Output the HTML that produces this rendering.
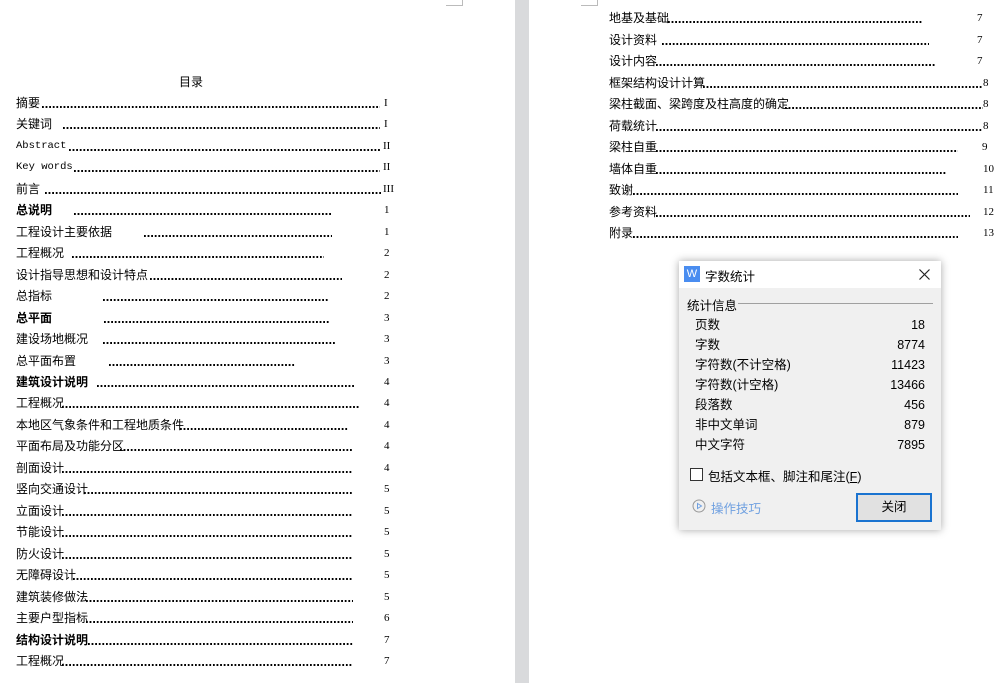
<!DOCTYPE html>
<html><head><meta charset="utf-8"><style>
body{margin:0;width:1004px;height:683px;position:relative;overflow:hidden;background:#fff;font-family:"Liberation Sans","Noto Sans CJK SC",sans-serif;color:#000}
.t{position:absolute;font-size:12px;line-height:14px;white-space:nowrap}
.b{font-weight:bold}
.m{font-family:"Liberation Mono","Noto Sans CJK SC",monospace;font-size:10.5px}
.d{position:absolute;height:2px;background-image:linear-gradient(90deg,#000 0 2px,transparent 2px);background-size:3.6px 2px}
.n{position:absolute;font-size:11px;line-height:14px;font-family:"Liberation Serif",serif}
.gap{position:absolute;left:515px;top:0;width:14px;height:683px;background:#d9dadc}
.dlg{position:absolute;left:679px;top:261px;width:262px;height:269px;background:#f0f0f0;box-shadow:0 0 8px rgba(0,0,0,.35);font-size:12.5px}
.dlg .tb{height:27px;background:#fff;position:relative}
.row{position:absolute;left:16px;right:16px;height:16px;line-height:16px}
.row span{position:absolute;top:0;left:0}
.row span:last-child{left:auto;right:0}
</style></head><body>
<div style="position:absolute;left:446px;top:5px;width:17px;height:1px;background:#bbb"></div>
<div style="position:absolute;left:462px;top:0;width:1px;height:6px;background:#bbb"></div>
<div style="position:absolute;left:581px;top:5px;width:17px;height:1px;background:#bbb"></div>
<div style="position:absolute;left:597px;top:0;width:1px;height:6px;background:#bbb"></div>
<div class="gap"></div>
<div class="t" style="left:179px;top:75px">目录</div>
<div id="L"></div>
<script>
var L=[["摘要",42,380,"I",384,0,0],["关键词",63,380,"I",384,0,0],["Abstract",69,381,"II",383,1,0],["Key words",74,380,"II",383,1,0],["前言",45,382,"III",383,0,0],["总说明",74,332,"1",384,0,1],["工程设计主要依据",144,332,"1",384,0,0],["工程概况",72,324,"2",384,0,0],["设计指导思想和设计特点",150,342,"2",384,0,0],["总指标",103,328,"2",384,0,0],["总平面",104,330,"3",384,0,1],["建设场地概况",103,336,"3",384,0,0],["总平面布置",109,295,"3",384,0,0],["建筑设计说明",97,354,"4",384,0,1],["工程概况",62,360,"4",384,0,0],["本地区气象条件和工程地质条件",180,348,"4",384,0,0],["平面布局及功能分区",120,353,"4",384,0,0],["剖面设计",62,353,"4",384,0,0],["竖向交通设计",84,353,"5",384,0,0],["立面设计",62,353,"5",384,0,0],["节能设计",62,353,"5",384,0,0],["防火设计",62,353,"5",384,0,0],["无障碍设计",73,353,"5",384,0,0],["建筑装修做法",86,353,"5",384,0,0],["主要户型指标",86,353,"6",384,0,0],["结构设计说明",88,353,"7",384,0,1],["工程概况",62,353,"7",384,0,0]];
var R=[["地基及基础",668,923,"7",977],["设计资料",662,929,"7",977],["设计内容",656,935,"7",977],["框架结构设计计算",703,983,"8",983],["梁柱截面、梁跨度及柱高度的确定",785,983,"8",983],["荷载统计",656,983,"8",983],["梁柱自重",656,958,"9",982],["墙体自重",656,947,"10",983],["致谢",633,958,"11",983],["参考资料",656,970,"12",983],["附录",633,958,"13",983]];
var h="";
function row(x,y,r){var c="t"+(r[5]?" m":"")+(r[6]?" b":"");h+='<div class="'+c+'" style="left:'+x+'px;top:'+(y-6)+'px">'+r[0]+'</div>';h+='<div class="d" style="left:'+r[1]+'px;top:'+(y+4)+'px;width:'+(r[2]-r[1])+'px"></div>';h+='<div class="n" style="left:'+r[4]+'px;top:'+(y-6)+'px">'+r[3]+'</div>';}
L.forEach(function(r,i){row(16,Math.round(102+21.46*i),r)});
R.forEach(function(r,i){row(609,Math.round(17+21.5*i),r)});
document.getElementById("L").innerHTML=h;
</script>
<div class="dlg">
<div class="tb">
<div style="position:absolute;left:5px;top:5px;width:16px;height:16px;background:#4a8df0;color:#fff;font-size:11px;line-height:16px;text-align:center">W</div>
<div style="position:absolute;left:26px;top:5px">字数统计</div>
<svg style="position:absolute;right:11px;top:8px" width="11" height="11" viewBox="0 0 11 11"><path d="M0.5 0.5L10.5 10.5M10.5 0.5L0.5 10.5" stroke="#222" stroke-width="1.2"/></svg>
</div>
<div style="position:absolute;left:8px;top:34px">统计信息</div>
<div style="position:absolute;left:59px;right:8px;top:42px;height:1px;background:#a0a0a0"></div>
<div class="row" style="top:56px"><span>页数</span><span>18</span></div>
<div class="row" style="top:76px"><span>字数</span><span>8774</span></div>
<div class="row" style="top:96px"><span>字符数(不计空格)</span><span>11423</span></div>
<div class="row" style="top:116px"><span>字符数(计空格)</span><span>13466</span></div>
<div class="row" style="top:136px"><span>段落数</span><span>456</span></div>
<div class="row" style="top:156px"><span>非中文单词</span><span>879</span></div>
<div class="row" style="top:176px"><span>中文字符</span><span>7895</span></div>
<div style="position:absolute;left:11px;top:207px;width:11px;height:11px;border:1px solid #333;background:#fff"></div>
<div style="position:absolute;left:29px;top:205px">包括文本框、脚注和尾注(<u>F</u>)</div>
<svg style="position:absolute;left:13px;top:238px" width="14" height="14" viewBox="0 0 14 14"><circle cx="7" cy="7" r="6" fill="none" stroke="#999" stroke-width="1"/><path d="M5.5 4.5L9.5 7L5.5 9.5Z" fill="none" stroke="#6fa0e0" stroke-width="1"/></svg>
<div style="position:absolute;left:32px;top:237px;color:#6fa0e0">操作技巧</div>
<div style="position:absolute;left:177px;top:232px;width:72px;height:25px;border:2px solid #1a73d0;background:#e1e1e1;text-align:center;line-height:25px">关闭</div>
</div>
</body></html>
